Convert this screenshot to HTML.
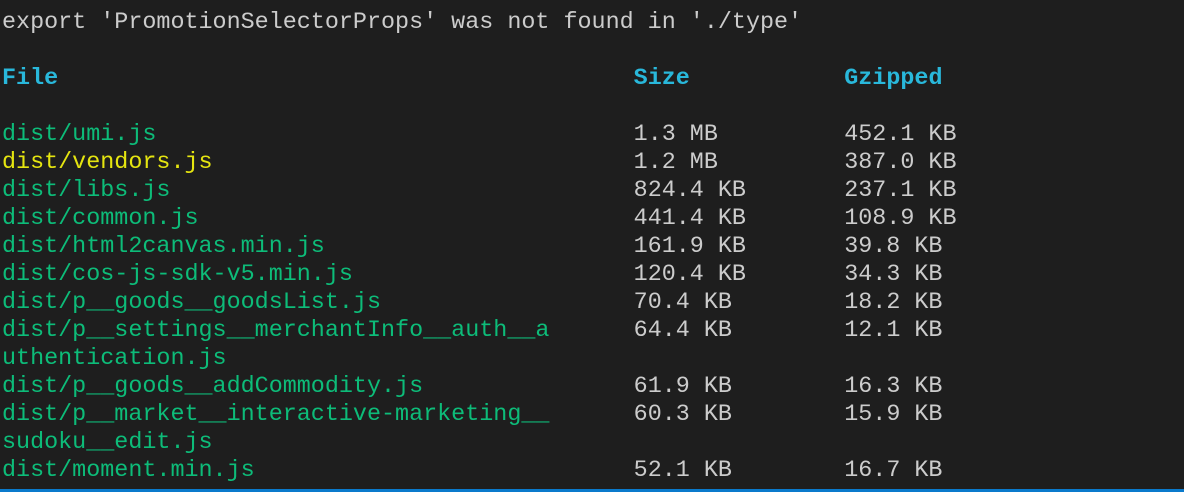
<!DOCTYPE html>
<html><head><style>
html,body{margin:0;padding:0;background:#1e1e1e;width:1184px;height:492px;overflow:hidden}
pre{position:absolute;left:2px;top:9px;margin:0;font-family:"Liberation Mono",monospace;font-size:23.4px;line-height:28px;color:#cccccc;white-space:pre}
.g{color:#0dbc79}.y{color:#e5e510}.b{color:#29b8db;font-weight:bold}
.bar{position:absolute;left:0;bottom:0;width:1184px;height:3px;background:#0a7acc}
</style></head><body>
<pre>export 'PromotionSelectorProps' was not found in './type'

<span class="b">File</span>                                         <span class="b">Size</span>           <span class="b">Gzipped</span>

<span class="g">dist/umi.js</span>                                  1.3 MB         452.1 KB
<span class="y">dist/vendors.js</span>                              1.2 MB         387.0 KB
<span class="g">dist/libs.js</span>                                 824.4 KB       237.1 KB
<span class="g">dist/common.js</span>                               441.4 KB       108.9 KB
<span class="g">dist/html2canvas.min.js</span>                      161.9 KB       39.8 KB
<span class="g">dist/cos-js-sdk-v5.min.js</span>                    120.4 KB       34.3 KB
<span class="g">dist/p__goods__goodsList.js</span>                  70.4 KB        18.2 KB
<span class="g">dist/p__settings__merchantInfo__auth__a</span>      64.4 KB        12.1 KB
<span class="g">uthentication.js</span>
<span class="g">dist/p__goods__addCommodity.js</span>               61.9 KB        16.3 KB
<span class="g">dist/p__market__interactive-marketing__</span>      60.3 KB        15.9 KB
<span class="g">sudoku__edit.js</span>
<span class="g">dist/moment.min.js</span>                           52.1 KB        16.7 KB</pre>
<div class="bar"></div>
</body></html>
